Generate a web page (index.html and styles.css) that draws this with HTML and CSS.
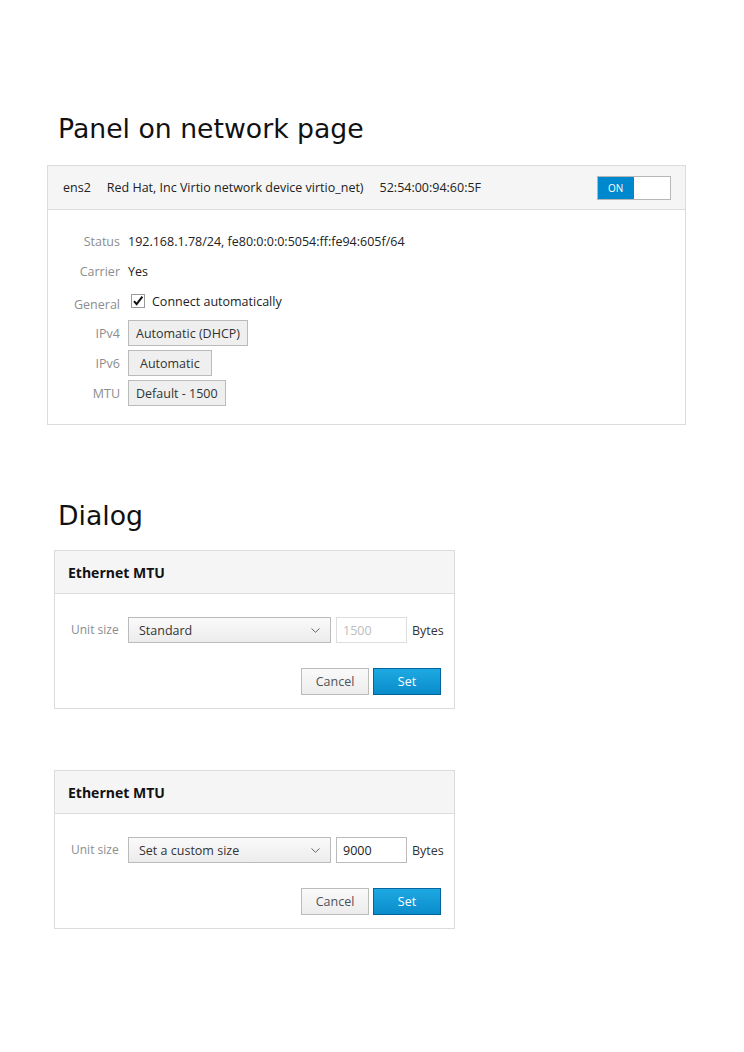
FILE: index.html
```html
<!DOCTYPE html>
<html>
<head>
<meta charset="utf-8">
<link rel="stylesheet" href="styles.css">
</head>
<body>
<div class="page">
  <h1 class="title title-first">Panel on network page</h1>
  <div class="panel">
    <div class="panel-head">
      <span>ens2</span>
      <span>Red Hat, Inc Virtio network device virtio_net)</span>
      <span>52:54:00:94:60:5F</span>
      <span class="spacer"></span>
      <span class="toggle"><span class="toggle-on">ON</span><span class="toggle-off"></span></span>
    </div>
    <div class="panel-body">
      <div class="lbl">Status</div><div class="val">192.168.1.78/24, fe80:0:0:0:5054:ff:fe94:605f/64</div>
      <div class="lbl">Carrier</div><div class="val">Yes</div>
      <div class="lbl lbl-general">General</div>
      <div class="val val-check">
        <svg class="check" width="14" height="14" viewBox="0 0 14 14"><rect x="0.5" y="0.5" width="13" height="13" fill="#fff" stroke="#9a9a9a"/><path d="M3 7.2 L5.6 10.2 L11.4 2.6" fill="none" stroke="#111" stroke-width="2"/></svg>
        <span>Connect automatically</span>
      </div>
      <div class="lbl">IPv4</div><div class="val"><span class="btn">Automatic (DHCP)</span></div>
      <div class="lbl">IPv6</div><div class="val"><span class="btn btn-wide">Automatic</span></div>
      <div class="lbl">MTU</div><div class="val"><span class="btn">Default - 1500</span></div>
    </div>
  </div>

  <h1 class="title title-dialog">Dialog</h1>
  <div class="dialog">
    <div class="dialog-head">Ethernet MTU</div>
    <div class="dialog-body">
      <div class="dlg-row">
        <span class="dlg-lbl">Unit size</span>
        <span class="select"><span>Standard</span><svg width="9" height="5" viewBox="0 0 9 5"><path d="M0.5 0.5 L4.5 4.3 L8.5 0.5" fill="none" stroke="#666" stroke-width="1"/></svg></span>
        <span class="input input-disabled">1500</span>
        <span class="unit">Bytes</span>
      </div>
      <div class="dlg-foot">
        <span class="dbtn">Cancel</span>
        <span class="dbtn dbtn-primary">Set</span>
      </div>
    </div>
  </div>

  <div class="dialog dialog-second">
    <div class="dialog-head">Ethernet MTU</div>
    <div class="dialog-body">
      <div class="dlg-row">
        <span class="dlg-lbl">Unit size</span>
        <span class="select"><span>Set a custom size</span><svg width="9" height="5" viewBox="0 0 9 5"><path d="M0.5 0.5 L4.5 4.3 L8.5 0.5" fill="none" stroke="#666" stroke-width="1"/></svg></span>
        <span class="input">9000</span>
        <span class="unit">Bytes</span>
      </div>
      <div class="dlg-foot">
        <span class="dbtn">Cancel</span>
        <span class="dbtn dbtn-primary">Set</span>
      </div>
    </div>
  </div>
</div>
</body>
</html>
```

FILE: styles.css
```css
html, body {
  margin: 0;
  padding: 0;
  background: #fff;
}
body {
  font-family: "Open Sans", "Noto Sans", sans-serif;
  font-size: 12.5px;
  color: #222;
}
.page {
  padding-top: 113px;
  padding-bottom: 40px;
}
.title {
  margin: 0 0 0 58px;
  font-family: "DejaVu Sans", sans-serif;
  font-size: 26.7px;
  font-weight: 400;
  line-height: 31px;
  color: #111;
}
.title-first {
  margin-bottom: 21px;
}
.title-dialog {
  margin-top: 75px;
  margin-bottom: 19px;
}
.panel {
  margin-left: 47px;
  width: 637px;
  border: 1px solid #dcdcdc;
}
.panel-head {
  display: flex;
  align-items: center;
  gap: 16px;
  height: 43px;
  padding: 0 14px 0 15px;
  background: #f5f5f5;
  border-bottom: 1px solid #dcdcdc;
}
.spacer {
  flex: 1;
}
.toggle {
  display: flex;
  width: 72px;
  height: 22px;
  border: 1px solid #b7b7b7;
  background: #fff;
}
.toggle-on {
  width: 36px;
  background: #0088ce;
  color: #fff;
  font-size: 10px;
  display: flex;
  align-items: center;
  padding-left: 10px;
  box-sizing: border-box;
}
.toggle-off {
  flex: 1;
}
.panel-body {
  display: grid;
  grid-template-columns: 72px 1fr;
  grid-template-rows: 26px 26px 28px 26px 26px 26px;
  column-gap: 8px;
  row-gap: 4px;
  padding: 18px 0 18px 0;
}
.lbl {
  color: #8b8d8f;
  display: flex;
  align-items: center;
  justify-content: flex-end;
}
.lbl-general {
  padding-top: 4px;
}
.val {
  display: flex;
  align-items: center;
}
.val-check {
  gap: 7px;
  padding-left: 3px;
  padding-bottom: 2px;
}
.check {
  display: block;
}
.btn {
  display: inline-flex;
  align-items: center;
  height: 24px;
  padding: 0 7px;
  border: 1px solid #bbb;
  background: #efefef;
  color: #333;
}
.btn-wide {
  padding: 0 11px;
}
.dialog {
  margin-left: 54px;
  width: 399px;
  border: 1px solid #dcdcdc;
}
.dialog-second {
  margin-top: 61px;
}
.dialog-head {
  height: 42px;
  display: flex;
  align-items: center;
  padding-left: 13px;
  background: #f5f5f5;
  border-bottom: 1px solid #dcdcdc;
  font-weight: 700;
  font-size: 14px;
  color: #111;
}
.dialog-body {
  padding: 23px 13px 13px 16px;
}
.dlg-row {
  display: flex;
  align-items: center;
}
.dlg-row > * {
  flex: none;
}
.dlg-lbl {
  color: #8b8d8f;
  width: 57px;
  font-size: 12px;
  white-space: nowrap;
  padding-bottom: 2px;
}
.select {
  box-sizing: border-box;
  width: 203px;
  height: 26px;
  border: 1px solid #bbb;
  background: linear-gradient(#fafafa, #ececec);
  display: flex;
  align-items: center;
  justify-content: space-between;
  padding: 0 10px 0 10px;
  color: #333;
}
.input {
  box-sizing: border-box;
  width: 71px;
  height: 26px;
  margin-left: 5px;
  border: 1px solid #bbb;
  background: #fff;
  display: flex;
  align-items: center;
  padding-left: 6px;
  color: #222;
}
.input-disabled {
  border-color: #ddd;
  color: #bbb;
}
.unit {
  margin-left: 5px;
  color: #333;
}
.dlg-foot {
  display: flex;
  justify-content: flex-end;
  gap: 4px;
  margin-top: 25px;
}
.dbtn {
  box-sizing: border-box;
  width: 68px;
  height: 27px;
  display: flex;
  align-items: center;
  justify-content: center;
  border: 1px solid #bbb;
  background: linear-gradient(#fafafa, #ececec);
  color: #4d5258;
}
.dbtn-primary {
  border-color: #00659c;
  background: linear-gradient(#1ea9e2, #0a8ccb);
  color: #fff;
}
```
